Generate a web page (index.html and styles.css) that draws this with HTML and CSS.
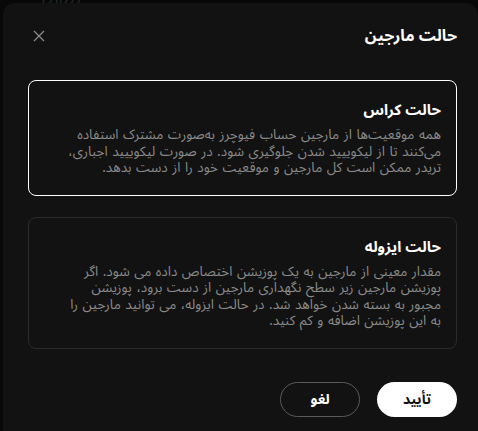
FILE: index.html
```html
<!DOCTYPE html>
<html lang="fa">
<head>
    <meta charset="utf-8">
    <meta name="viewport" content="width=device-width, initial-scale=1.0">
    <title>حالت مارجین</title>
    <link rel="stylesheet" href="styles.css">
</head>
<body>
    <div class="backdrop">
        <span class="backdrop-price">12.0222</span>
    </div>
    <div class="modal" dir="rtl">
        <div class="modal-header">
            <h2 class="modal-title">حالت مارجین</h2>
            <button class="close-btn" aria-label="بستن">
                <svg width="12" height="12" viewBox="0 0 12 12">
                    <path d="M1 1L11 11M11 1L1 11" stroke="#8a8a8a" stroke-width="1.3" fill="none"/>
                </svg>
            </button>
        </div>

        <div class="option-list">
            <div class="option selected">
                <h3 class="option-title">حالت کراس</h3>
                <p class="option-desc">همه موقعیت‌ها از مارجین حساب فیوچرز به‌صورت مشترک استفاده<br>می‌کنند تا از لیکوییید شدن جلوگیری شود. در صورت لیکوییید اجباری،<br>تریدر ممکن است کل مارجین و موقعیت خود را از دست بدهد.</p>
            </div>
            <div class="option">
                <h3 class="option-title">حالت ایزوله</h3>
                <p class="option-desc">مقدار معینی از مارجین به یک پوزیشن اختصاص داده می شود. اگر<br>پوزیشن مارجین زیر سطح نگهداری مارجین از دست برود، پوزیشن<br>مجبور به بسته شدن خواهد شد. در حالت ایزوله، می توانید مارجین را<br>به این پوزیشن اضافه و کم کنید.</p>
            </div>
        </div>

        <div class="modal-actions">
            <button class="btn btn-primary">تأیید</button>
            <button class="btn btn-outline">لغو</button>
        </div>
    </div>
</body>
</html>
```

FILE: styles.css
```css
body {
    margin: 0;
    height: 100vh;
    background-color: #080808;
    overflow: hidden;
    font-family: "Noto Sans Arabic", "DejaVu Sans", "Noto Sans", sans-serif;
    position: relative;
}

/* Page behind the modal, only its top edge shows */
.backdrop {
    position: absolute;
    top: 0;
    left: 0;
    width: 100%;
    height: 8px;
    overflow: hidden;
}
.backdrop-price {
    position: absolute;
    top: -9px;
    left: 40px;
    font-size: 11px;
    color: #333333;
}

.modal {
    position: absolute;
    top: 3px;
    left: 3px;
    right: 0;
    bottom: 0;
    background-color: #121212;
    border-radius: 12px 12px 0 0;
    padding: 0 21px 0 25px;
    display: flex;
    flex-direction: column;
}

.modal-header {
    height: 66px;
    display: flex;
    align-items: center;
    justify-content: space-between;
    padding: 0 0 0 5px;
}
.modal-title {
    margin: 0;
    font-size: 16px;
    font-weight: 700;
    color: #ffffff;
}
.close-btn {
    background: none;
    border: none;
    padding: 0;
    width: 12px;
    height: 12px;
    display: flex;
    cursor: pointer;
}

.option-list {
    margin-top: 11px;
    display: flex;
    flex-direction: column;
    gap: 21px;
}
.option {
    border: 1px solid #2a2a2a;
    border-radius: 8px;
    padding: 19px 15px 18px 15px;
}
.option.selected {
    border-color: #ffffff;
}
.option-title {
    margin: 0 0 6px 0;
    font-size: 15px;
    font-weight: 700;
    line-height: 21px;
    color: #ffffff;
}
.option-desc {
    margin: 0;
    font-size: 13.5px;
    line-height: 16.5px;
    word-spacing: 1px;
    white-space: nowrap;
    color: #8a8a8a;
}

.modal-actions {
    margin-top: 33px;
    display: flex;
    gap: 17px;
}
.btn {
    width: 80px;
    height: 35px;
    border-radius: 18px;
    font-family: inherit;
    font-size: 14px;
    font-weight: 700;
    cursor: pointer;
}
.btn-primary {
    background-color: #ffffff;
    border: none;
    color: #121212;
}
.btn-outline {
    background: transparent;
    border: 1px solid #5a5a5a;
    color: #ffffff;
}
```
